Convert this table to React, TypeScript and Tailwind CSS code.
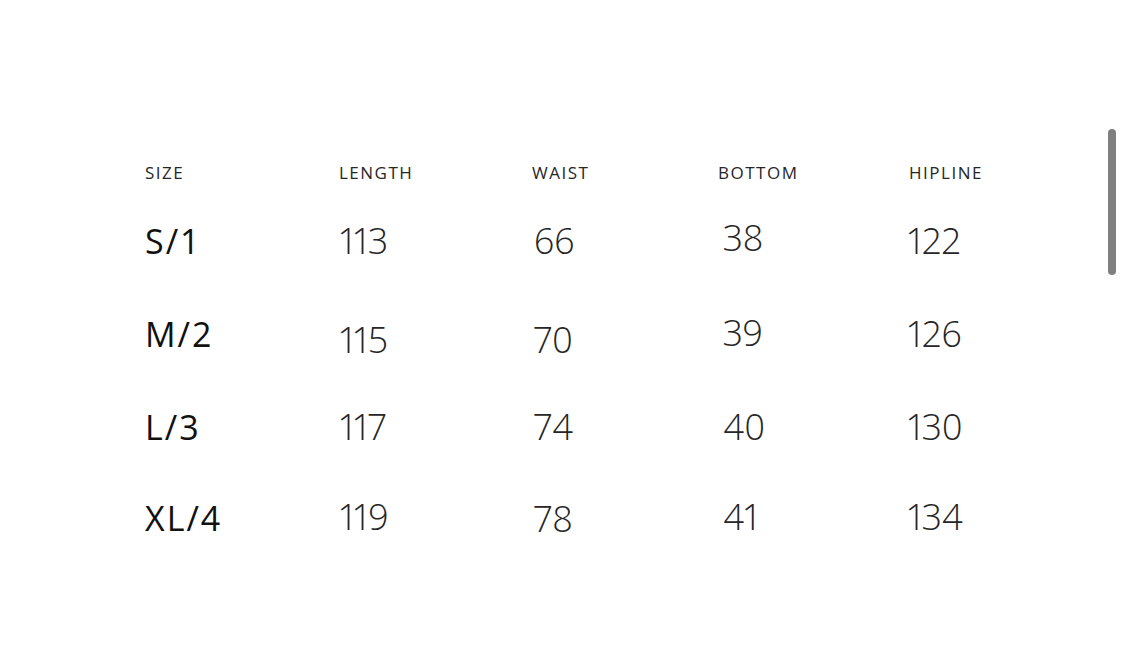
import React from "react";

type Row = {
  size: string;
  values: { v: string; shift?: string }[];
};

const headers = ["SIZE", "LENGTH", "WAIST", "BOTTOM", "HIPLINE"];

const rows: Row[] = [
  { size: "S/1", values: [{ v: "113" }, { v: "66" }, { v: "38", shift: "-mt-[6px]" }, { v: "122" }] },
  { size: "M/2", values: [{ v: "115", shift: "mt-[12px]" }, { v: "70", shift: "mt-[12px]" }, { v: "39", shift: "-mt-[2px]" }, { v: "126" }] },
  { size: "L/3", values: [{ v: "117" }, { v: "74" }, { v: "40" }, { v: "130" }] },
  { size: "XL/4", values: [{ v: "119", shift: "-mt-[2px]" }, { v: "78", shift: "mt-[2px]" }, { v: "41", shift: "-mt-[2px]" }, { v: "134", shift: "-mt-[2px]" }] },
];

const cols = "grid grid-cols-[194px_193px_186px_191px_1fr] items-center";

function SizeChart() {
  return (
    <div className="relative w-[1125px] h-[668px] bg-white overflow-hidden font-['Open_Sans',sans-serif]">
      <div className="pl-[145px] pt-[159px]">
        <div className={`${cols} h-[26px]`}>
          {headers.map((h) => (
            <div key={h} className="text-[17px] tracking-[1.5px] text-[#262626] leading-none">
              {h}
            </div>
          ))}
        </div>
        <div className="mt-[43px]">
          {rows.map((r, idx) => (
            <div key={r.size} className={`${cols} ${idx === 3 ? "h-[90px]" : "h-[93px]"}`}>
              <div className="text-[34px] tracking-[2px] text-[#111] leading-none -mt-[68px]">
                {r.size}
              </div>
              {r.values.map((c, i) => (
                <div
                  key={i}
                  className={`text-[36px] font-light proportional-nums text-[#262626] leading-none -mt-[68px] ${
                    i === 0 ? "pl-[1px]" : i === 1 ? "pl-[2px]" : i === 2 ? "pl-[5px]" : "-ml-[1px]"
                  }`}
                >
                  <div className={c.shift ?? ""}>{c.v}</div>
                </div>
              ))}
            </div>
          ))}
        </div>
      </div>
      <div className="absolute left-[1108px] top-[129px] w-[8px] h-[146px] rounded-full bg-[#7f7f7f]" />
    </div>
  );
}

export default function App() {
  return <SizeChart />;
}
